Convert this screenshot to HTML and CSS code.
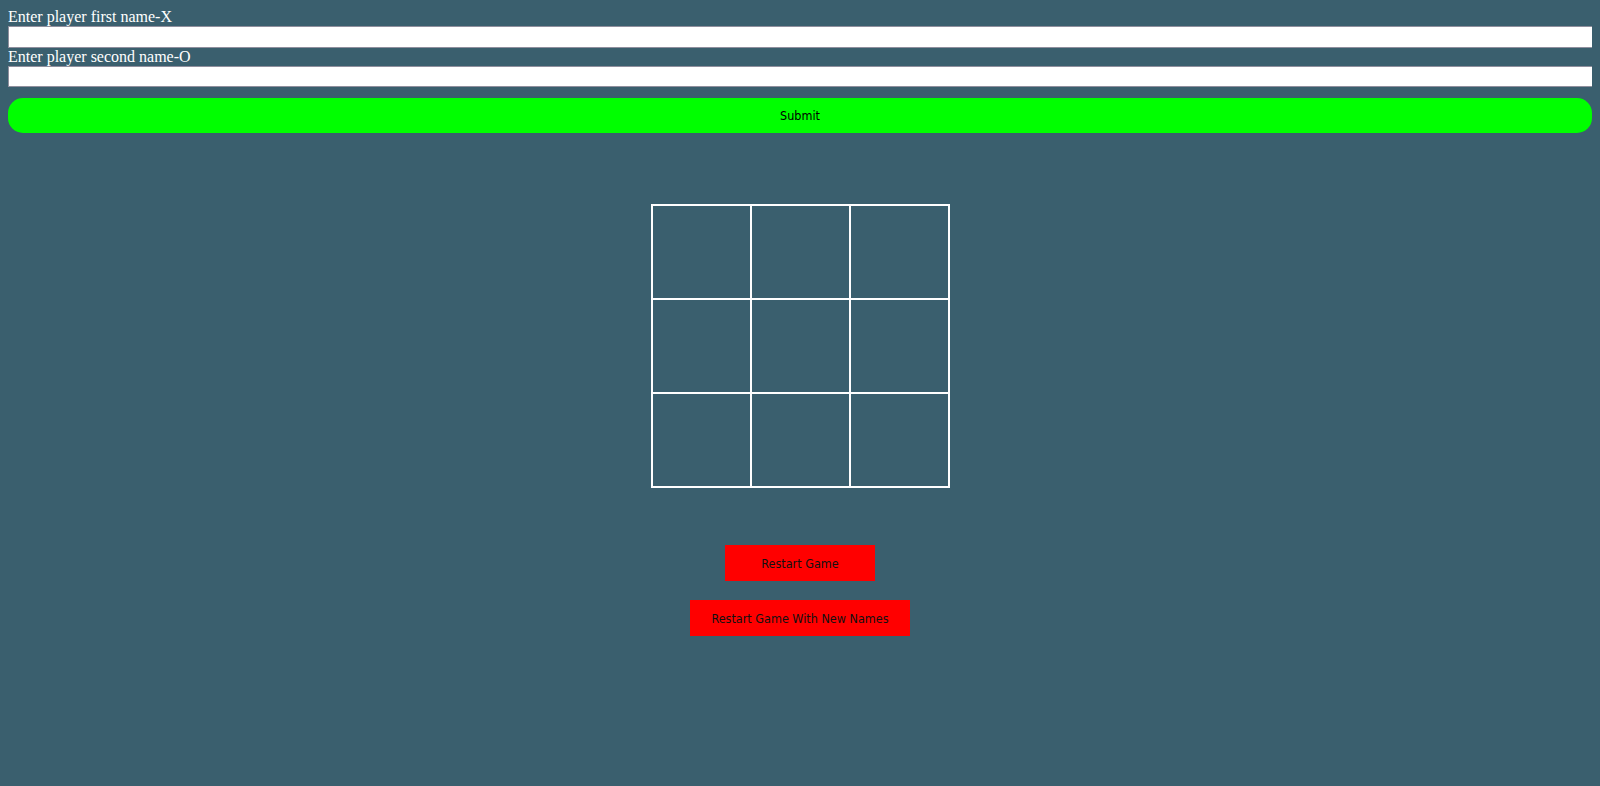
FILE: index.html
```html
<!DOCTYPE html>
<html>
<head>
<meta charset="utf-8">
<title>Tic Tac Toe</title>
<link rel="stylesheet" href="styles.css">
</head>
<body>
<form class="names">
  <label class="label" for="p1">Enter player first name-X</label>
  <input class="field" id="p1" type="text">
  <label class="label" for="p2">Enter player second name-O</label>
  <input class="field" id="p2" type="text">
  <button class="submit" type="button">Submit</button>
</form>
<div class="game">
  <div class="board">
    <div class="cell"></div><div class="cell"></div><div class="cell"></div>
    <div class="cell"></div><div class="cell"></div><div class="cell"></div>
    <div class="cell"></div><div class="cell"></div><div class="cell"></div>
  </div>
  <div class="actions">
    <button class="restart restart-short" type="button">Restart Game</button>
    <button class="restart restart-long" type="button">Restart Game With New Names</button>
  </div>
</div>
</body>
</html>
```
FILE: styles.css
```css
html, body {
  background: #3a5f6e;
}
body {
  margin: 8px;
  font-family: "Liberation Serif", serif;
  font-size: 16px;
  color: #ffffff;
}
.names {
  display: flex;
  flex-direction: column;
  align-items: stretch;
  margin: 0;
}
.label {
  display: block;
  line-height: normal;
}
.field {
  display: block;
  box-sizing: border-box;
  width: auto;
  align-self: stretch;
  height: 21.5px;
  padding: 1px 3px;
  border: 1px solid #8f8f9d;
  background: #ffffff;
  font-size: 13px;
  margin: 0 -8px 0 0;
}
.submit {
  display: block;
  height: 35px;
  margin-top: 11px;
  border: none;
  border-radius: 15px;
  background: #00ff00;
  color: #000000;
  font-family: "DejaVu Sans Condensed", "DejaVu Sans", sans-serif;
  font-size: 12.5px;
}
.game {
  display: flex;
  flex-direction: column;
  align-items: center;
  margin-top: 71px;
}
.board {
  display: grid;
  grid-template-columns: repeat(3, 99px);
  grid-auto-rows: 94px;
  border: 1px solid #ffffff;
}
.cell {
  border: 1px solid #ffffff;
}
.actions {
  display: flex;
  flex-direction: column;
  align-items: center;
  gap: 19px;
  margin-top: 57px;
}
.restart {
  height: 36px;
  border: none;
  background: #ff0000;
  color: #111111;
  font-family: "DejaVu Sans Condensed", "DejaVu Sans", sans-serif;
  font-size: 12.5px;
  padding: 0;
}
.restart-short {
  width: 150px;
}
.restart-long {
  width: 220px;
}
```
